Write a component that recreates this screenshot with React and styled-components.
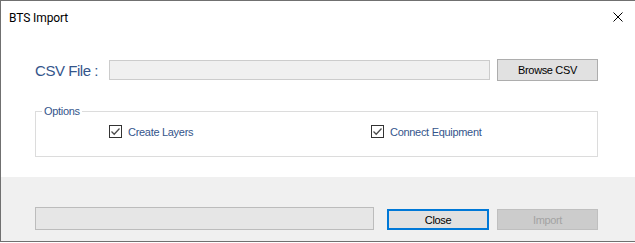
import React from "react";
import styled, { createGlobalStyle } from "styled-components";

const Global = createGlobalStyle`
  html, body { margin: 0; padding: 0; background: #ffffff; }
  body { font-family: "Liberation Sans", Arial, sans-serif; }
  * { box-sizing: border-box; }
`;

const Window = styled.div`
  width: 635px;
  height: 242px;
  border: 1px solid #707070;
  border-right: none;
  background: #ffffff;
  display: flex;
  flex-direction: column;
`;

const TitleBar = styled.div`
  height: 30px;
  display: flex;
  align-items: center;
  justify-content: space-between;
  padding: 0 12px 0 8px;
`;

const Title = styled.span`
  font-family: Roboto, "Liberation Sans", sans-serif;
  font-size: 12px;
  color: #000000;
  letter-spacing: -0.1px;
  padding-top: 3px;
`;

const CloseX = styled.svg`
  width: 10px;
  height: 10px;
  margin-top: 2px;
`;

const Body = styled.div`
  height: 146px;
  padding: 28px 0 0 34px;
  display: flex;
  flex-direction: column;
  gap: 30px;
`;

const FileRow = styled.div`
  width: 563px;
  height: 22px;
  display: flex;
  align-items: center;
`;

const BigLabel = styled.span`
  width: 74px;
  font-size: 15px;
  letter-spacing: -0.45px;
  color: #34558b;
  padding-top: 1px;
`;

const Field = styled.div`
  width: 381px;
  height: 20px;
  background: #f0f0f0;
  border: 1px solid #cccccc;
  margin-right: 7px;
`;

const Button = styled.button`
  width: ${(p) => p.$w}px;
  height: ${(p) => p.$h}px;
  padding: 0;
  font-family: "Liberation Sans", Arial, sans-serif;
  font-size: 11px;
  letter-spacing: -0.35px;
  color: ${(p) => (p.$disabled ? "#a3a3a3" : "#000000")};
  background: ${(p) => (p.$disabled ? "#cccccc" : "#e1e1e1")};
  border: ${(p) =>
    p.$default ? "2px solid #0078d7" : p.$disabled ? "1px solid #bfbfbf" : "1px solid #adadad"};
  display: flex;
  align-items: center;
  justify-content: center;
`;

const Group = styled.div`
  position: relative;
  width: 563px;
  height: 46px;
  border: 1px solid #dcdcdc;
  padding: 13px 0 0 73px;
  display: grid;
  grid-template-columns: 262px auto;
  align-content: start;
`;

const Legend = styled.span`
  position: absolute;
  left: 6px;
  top: -8px;
  padding: 0 2px;
  background: #ffffff;
  font-size: 11px;
  line-height: 14px;
  letter-spacing: -0.3px;
  color: #34558b;
`;

const Check = styled.label`
  display: flex;
  align-items: center;
  gap: 6px;
  font-size: 11px;
  letter-spacing: -0.3px;
  color: #34558b;
  height: 13px;
`;

const Box = styled.span`
  width: 13px;
  height: 13px;
  border: 1px solid #333333;
  background: #ffffff;
  display: flex;
  align-items: center;
  justify-content: center;
`;

const Footer = styled.div`
  flex: 1;
  background: #f0f0f0;
  padding: 30px 0 0 34px;
`;

const FooterRow = styled.div`
  width: 563px;
  display: flex;
  align-items: flex-end;
`;

const Progress = styled.div`
  width: 339px;
  height: 23px;
  background: #e6e6e6;
  border: 1px solid #bcbcbc;
  margin-right: 13px;
`;

const Spacer = styled.div`
  width: ${(p) => p.$w}px;
`;

function Checkbox({ label }) {
  return (
    <Check>
      <Box>
        <svg width="11" height="11" viewBox="0 0 11 11">
          <path d="M1.5 5.5 L4.2 8.2 L9.5 2.5" fill="none" stroke="#4d4d4d" strokeWidth="1.3" />
        </svg>
      </Box>
      {label}
    </Check>
  );
}

export default function App() {
  return (
    <>
      <Global />
      <Window>
        <TitleBar>
          <Title>BTS Import</Title>
          <CloseX viewBox="0 0 10 10">
            <path d="M0.5 0.5 L9.5 9.5 M9.5 0.5 L0.5 9.5" stroke="#000" strokeWidth="1" />
          </CloseX>
        </TitleBar>
        <Body>
          <FileRow>
            <BigLabel>CSV File :</BigLabel>
            <Field />
            <Button $w={101} $h={22}>Browse CSV</Button>
          </FileRow>
          <Group>
            <Legend>Options</Legend>
            <Checkbox label="Create Layers" />
            <Checkbox label="Connect Equipment" />
          </Group>
        </Body>
        <Footer>
          <FooterRow>
            <Progress />
            <Button $w={102} $h={21} $default>Close</Button>
            <Spacer $w={8} />
            <Button $w={101} $h={21} $disabled>Import</Button>
          </FooterRow>
        </Footer>
      </Window>
    </>
  );
}
